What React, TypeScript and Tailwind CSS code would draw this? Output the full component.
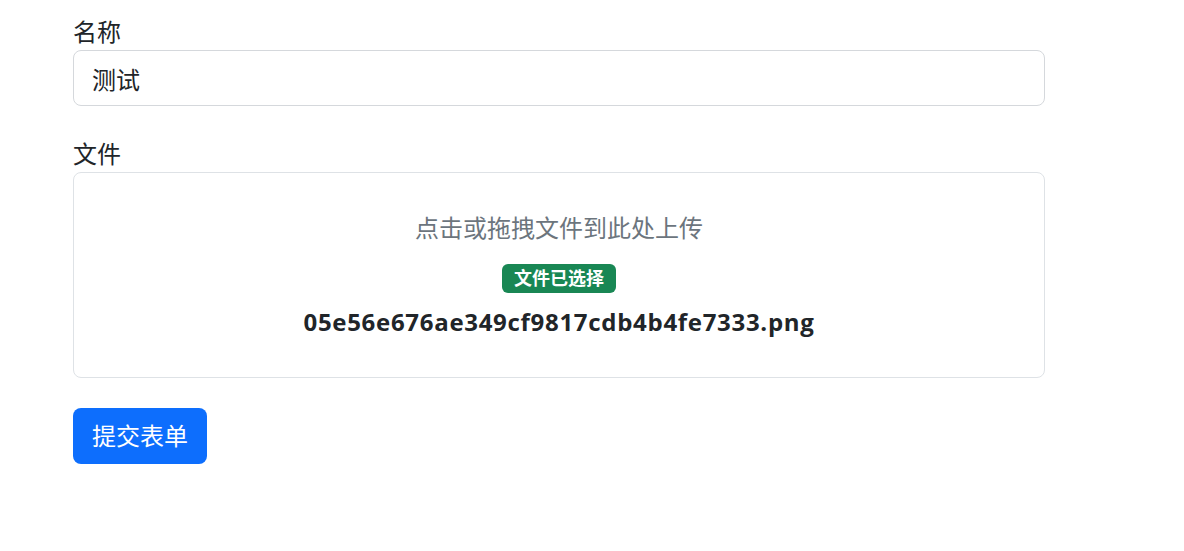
import React, { useState } from 'react';

export default function App() {
  const [name, setName] = useState('测试');
  const fileName = '05e56e676ae349cf9817cdb4b4fe7333.png';

  return (
    <div
      className="min-h-[551px] w-full bg-white text-[#212529]"
      style={{ fontFamily: '"Open Sans", "Noto Sans CJK SC", sans-serif' }}
    >
      <form className="ml-[73px] w-[972px] pt-[14px]" onSubmit={(e) => e.preventDefault()}>
        {/* Name */}
        <div className="mb-[30px]">
          <label className="block text-[24px] leading-[36px] mb-0">名称</label>
          <input
            type="text"
            value={name}
            onChange={(e) => setName(e.target.value)}
            className="block w-full h-[56px] px-[18px] text-[24px] text-[#212529] bg-white border border-[#d5d8dc] rounded-[8px] outline-none"
          />
        </div>

        {/* File */}
        <div className="mb-[30px]">
          <label className="block text-[24px] leading-[36px]">文件</label>
          <div className="w-full h-[206px] border border-[#dee2e6] rounded-[8px] flex flex-col items-center pt-[37px] cursor-pointer">
            <div className="text-[24px] leading-[36px] text-[#6c757d]">点击或拖拽文件到此处上传</div>
            <span className="mt-[18px] h-[29px] px-[12px] flex items-center rounded-[6px] bg-[#198754] text-white text-[18px] font-bold">
              文件已选择
            </span>
            <div className="mt-[11px] text-[24px] leading-[36px] font-bold tracking-[0.7px] text-[#212529]">{fileName}</div>
          </div>
        </div>

        <button
          type="submit"
          className="h-[56px] px-[19px] rounded-[8px] bg-[#0d6efd] text-white text-[24px]"
        >
          提交表单
        </button>
      </form>
    </div>
  );
}
